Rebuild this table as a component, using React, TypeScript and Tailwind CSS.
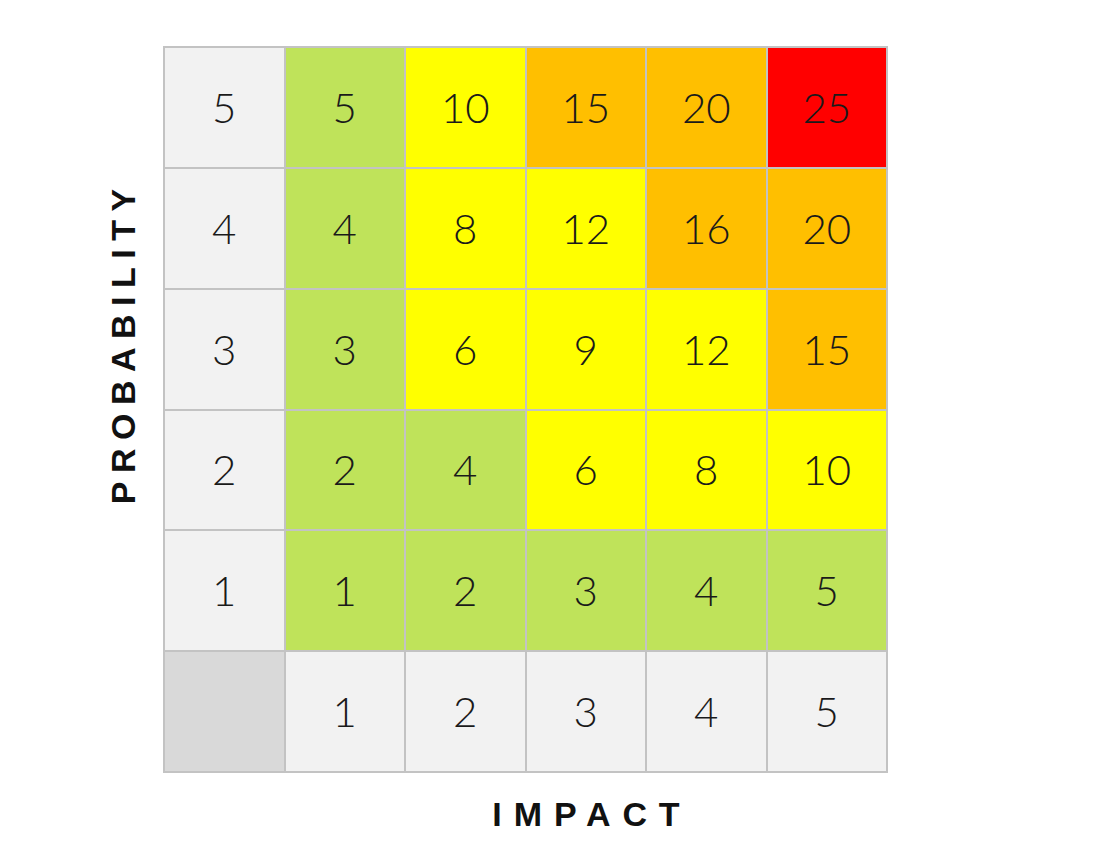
import * as React from "react";

// risk score colour bands
const cellColor = (score: number) => {
  if (score >= 25) return "bg-[#ff0000]";
  if (score >= 15) return "bg-[#ffbf00]";
  if (score >= 6) return "bg-[#ffff00]";
  return "bg-[#bfe35a]";
};

const cellText = "flex items-center justify-center text-[42px] font-light text-[#1a1a1a]";

export default function App() {
  const rows = [5, 4, 3, 2, 1];
  const cols = [1, 2, 3, 4, 5];

  return (
    <div className="w-[1109px] h-[861px] bg-white" style={{ fontFamily: "Lato, 'Open Sans', sans-serif" }}>
      <div className="flex pt-[46px] pl-[83px]">
        {/* Probability label */}
        <div className="w-[80px] h-[600px] flex items-center justify-center">
          <span
            className="-rotate-90 whitespace-nowrap text-[34px] font-bold tracking-[0.25em] pl-[0.25em] text-[#111]"
            style={{ fontFamily: "'Liberation Sans', Arial, sans-serif" }}
          >
            PROBABILITY
          </span>
        </div>

        <div className="flex flex-col">
          {/* Matrix */}
          <div className="grid grid-cols-6 grid-rows-6 w-[725px] h-[727px] gap-[2px] p-[2px] bg-[#c3c3c3]">
            {rows.map((p) => (
              <React.Fragment key={p}>
                <div className={`${cellText} bg-[#f2f2f2]`}>{p}</div>
                {cols.map((i) => (
                  <div key={i} className={`${cellText} ${cellColor(p * i)}`}>
                    {p * i}
                  </div>
                ))}
              </React.Fragment>
            ))}
            <div className="bg-[#d9d9d9]" />
            {cols.map((i) => (
              <div key={i} className={`${cellText} bg-[#f2f2f2]`}>
                {i}
              </div>
            ))}
          </div>

          {/* Impact label */}
          <div className="flex pl-[121px] pt-[16px]">
            <span
              className="flex-1 text-center text-[34px] font-bold tracking-[0.35em] pl-[0.35em] text-[#111]"
              style={{ fontFamily: "'Liberation Sans', Arial, sans-serif" }}
            >
              IMPACT
            </span>
          </div>
        </div>
      </div>
    </div>
  );
}
